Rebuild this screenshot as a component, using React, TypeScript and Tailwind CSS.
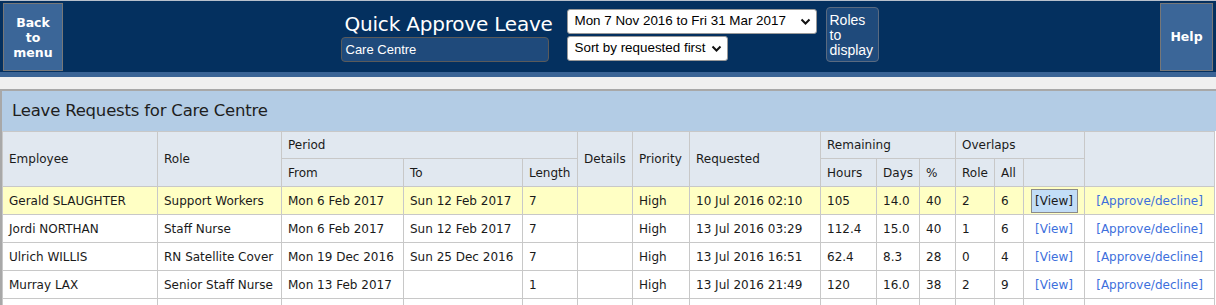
import React from "react";

interface Row {
  name: string;
  role: string;
  from: string;
  to: string;
  length: string;
  priority: string;
  requested: string;
  hours: string;
  days: string;
  pct: string;
  oRole: string;
  oAll: string;
  selected?: boolean;
}

const rows: Row[] = [
  { name: "Gerald SLAUGHTER", role: "Support Workers", from: "Mon 6 Feb 2017", to: "Sun 12 Feb 2017", length: "7", priority: "High", requested: "10 Jul 2016 02:10", hours: "105", days: "14.0", pct: "40", oRole: "2", oAll: "6", selected: true },
  { name: "Jordi NORTHAN", role: "Staff Nurse", from: "Mon 6 Feb 2017", to: "Sun 12 Feb 2017", length: "7", priority: "High", requested: "13 Jul 2016 03:29", hours: "112.4", days: "15.0", pct: "40", oRole: "1", oAll: "6" },
  { name: "Ulrich WILLIS", role: "RN Satellite Cover", from: "Mon 19 Dec 2016", to: "Sun 25 Dec 2016", length: "7", priority: "High", requested: "13 Jul 2016 16:51", hours: "62.4", days: "8.3", pct: "28", oRole: "0", oAll: "4" },
  { name: "Murray LAX", role: "Senior Staff Nurse", from: "Mon 13 Feb 2017", to: "", length: "1", priority: "High", requested: "13 Jul 2016 21:49", hours: "120", days: "16.0", pct: "38", oRole: "2", oAll: "9" },
  { name: "", role: "", from: "", to: "", length: "", priority: "", requested: "", hours: "", days: "", pct: "", oRole: "", oAll: "" },
];

const widths = [155, 124, 122, 119, 55, 55, 57, 131, 56, 43, 36, 39, 29, 61, 130];

function Chevron() {
  return (
    <svg width="11" height="7" viewBox="0 0 11 7" className="shrink-0">
      <path d="M1.5 1.5 L5.5 5.5 L9.5 1.5" fill="none" stroke="#111" strokeWidth="2" />
    </svg>
  );
}

export default function App() {
  const th = "border border-[#c8c8c8] px-[6px] text-left font-normal align-middle";
  const td = "border border-[#c8c8c8] px-[6px] h-[28px] align-middle whitespace-nowrap";
  return (
    <div className="w-[1216px] h-[305px] overflow-hidden bg-[#f0f0f0]" style={{ fontFamily: "'DejaVu Sans', sans-serif" }}>
      {/* Top bar */}
      <div className="border-t border-[#b8c0cc] bg-[#04305f] h-[72px] flex items-start px-[3px] pt-[2px]">
        <button className="w-[60px] h-[68px] bg-[#3b6698] border border-[#777] text-white font-bold text-[12.5px] leading-[15px] flex items-center justify-center text-center">
          Back<br />to<br />menu
        </button>
        <div className="flex-1 flex justify-center">
          <div className="flex items-start -ml-[4px]">
            <div className="w-[208px] flex flex-col">
              <div className="text-white text-[20px] leading-[24px] pl-[4px] mt-[9px] tracking-[-0.2px] whitespace-nowrap">Quick Approve Leave</div>
              <div className="mt-[1px] h-[25px] rounded-[4px] bg-[#1f4a7b] border border-[#5a5a5a] text-white text-[13px] flex items-center pl-[4px]" style={{ fontFamily: "'Liberation Sans', Arial, sans-serif" }}>
                Care Centre
              </div>
            </div>
            <div className="ml-[18px] flex flex-col mt-[6px]" style={{ fontFamily: "'Liberation Sans', Arial, sans-serif" }}>
              <div className="w-[250px] h-[25px] bg-white rounded-[3px] border border-[#999] flex items-center justify-between pl-[7px] pr-[5px] text-[13.4px] text-black">
                <span>Mon 7 Nov 2016 to Fri 31 Mar 2017</span>
                <Chevron />
              </div>
              <div className="mt-[2px] w-[161px] h-[25px] bg-white rounded-[3px] border border-[#999] flex items-center justify-between pl-[7px] pr-[5px] text-[13.4px] text-black">
                <span>Sort by requested first</span>
                <Chevron />
              </div>
            </div>
            <div className="ml-[9px] mt-[4px] w-[53px] h-[55px] rounded-[4px] bg-[#1f4a7b] border border-[#5a6a80] text-white text-[14px] leading-[15px] pl-[3px] pt-[5px]" style={{ fontFamily: "'Liberation Sans', Arial, sans-serif" }}>
              Roles<br />to<br />display
            </div>
          </div>
        </div>
        <button className="w-[53px] h-[68px] bg-[#3b6698] border border-[#777] text-white font-bold text-[12.5px] flex items-center justify-center">
          Help
        </button>
      </div>
      <div className="h-[5px] bg-[#3a6496]" />
      <div className="h-[12px]" />

      {/* Panel */}
      <div className="border-t-2 border-l-2 border-[#a8a8a8] bg-white">
        <div className="h-[40px] bg-[#b3cce5] flex items-center pl-[10px] text-[16.5px] text-[#1e1e1e] tracking-[-0.2px]">
          Leave Requests for Care Centre
        </div>
        <table className="table-fixed border-collapse text-[12px] text-[#1a1a1a]" style={{ width: 1212 }}>
          <colgroup>
            {widths.map((w, i) => (
              <col key={i} style={{ width: w }} />
            ))}
          </colgroup>
          <thead className="bg-[#e1e8f0]">
            <tr className="h-[27px]">
              <th rowSpan={2} className={th}>Employee</th>
              <th rowSpan={2} className={th}>Role</th>
              <th colSpan={3} className={th}>Period</th>
              <th rowSpan={2} className={th}>Details</th>
              <th rowSpan={2} className={th}>Priority</th>
              <th rowSpan={2} className={th}>Requested</th>
              <th colSpan={3} className={th}>Remaining</th>
              <th colSpan={3} className={th}>Overlaps</th>
              <th rowSpan={2} className={th}></th>
            </tr>
            <tr className="h-[28px]">
              <th className={th}>From</th>
              <th className={th}>To</th>
              <th className={th}>Length</th>
              <th className={th}>Hours</th>
              <th className={th}>Days</th>
              <th className={th}>%</th>
              <th className={th}>Role</th>
              <th className={th}>All</th>
              <th className={th}></th>
            </tr>
          </thead>
          <tbody>
            {rows.map((r, i) => (
              <tr key={i} className={r.selected ? "bg-[#ffffc4]" : "bg-white"}>
                <td className={td}>{r.name}</td>
                <td className={td}>{r.role}</td>
                <td className={td}>{r.from}</td>
                <td className={td}>{r.to}</td>
                <td className={td}>{r.length}</td>
                <td className={td}></td>
                <td className={td}>{r.priority}</td>
                <td className={td}>{r.requested}</td>
                <td className={td}>{r.hours}</td>
                <td className={td}>{r.days}</td>
                <td className={td}>{r.pct}</td>
                <td className={td}>{r.oRole}</td>
                <td className={td}>{r.oAll}</td>
                <td className={td + " text-center"}>
                  {r.name &&
                    (r.selected ? (
                      <span className="inline-flex items-center justify-center w-[47px] h-[24px] bg-[#c2ddf7] border border-[#8a8a8a] text-[#1a1a1a]">[View]</span>
                    ) : (
                      <span className="text-[#3d6fdc]">[View]</span>
                    ))}
                </td>
                <td className={td + " text-center"}>
                  {r.name && <span className="text-[#3d6fdc]">[Approve/decline]</span>}
                </td>
              </tr>
            ))}
          </tbody>
        </table>
      </div>
    </div>
  );
}
